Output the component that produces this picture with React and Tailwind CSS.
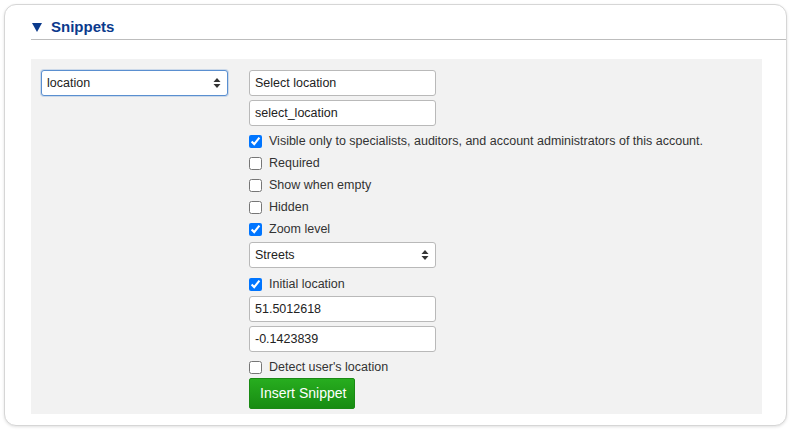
import React from 'react';

const FONT = { fontFamily: '"Liberation Sans", Arial, sans-serif' };

function Arrows() {
  return (
    <svg width="8" height="12" viewBox="0 0 8 12" className="absolute right-[6px] top-1/2 -translate-y-1/2">
      <path d="M4 1 L7.5 5 L0.5 5 Z" fill="#333" />
      <path d="M4 11 L7.5 7 L0.5 7 Z" fill="#333" />
    </svg>
  );
}

function Select({ value, focused }) {
  return (
    <div
      className={
        'relative w-[187px] h-[26px] rounded-[3px] bg-white flex items-center px-[5px] text-[12.5px] text-[#222] ' +
        (focused ? 'border border-[#5a8fd0] shadow-[0_0_0_1px_rgba(90,143,208,0.25)]' : 'border border-[#b9b9b9]')
      }
    >
      {value}
      <Arrows />
    </div>
  );
}

function Field({ value }) {
  return (
    <div className="w-[187px] h-[26px] rounded-[3px] bg-white border border-[#b9b9b9] flex items-center px-[5px] text-[12.5px] text-[#222]">
      {value}
    </div>
  );
}

function Check({ label, checked }) {
  return (
    <label className="h-[22px] pt-[2px] flex items-center gap-[7px] text-[12.5px] text-[#333]">
      <input
        type="checkbox"
        defaultChecked={checked}
        className="m-0 w-[13px] h-[13px] accent-[#0075ff]"
      />
      {label}
    </label>
  );
}

export default function App() {
  return (
    <div className="w-[790px] h-[431px] bg-white p-[4px] pr-[3px] pb-[5px]" style={FONT}>
      <div className="h-full rounded-[12px] border border-[#d6d6d6] shadow-[0_1px_3px_rgba(0,0,0,0.12)] bg-white pl-[26px] pt-[12px]">
        <div className="flex items-center gap-[9px] h-[20px] text-[15px] font-bold text-[#0b3a8c] pl-[1px]">
          <svg width="10" height="9" viewBox="0 0 10 9">
            <path d="M0 0 L10 0 L5 9 Z" fill="#0b3a8c" />
          </svg>
          <span>Snippets</span>
        </div>
        <div className="h-px bg-[#bdbdbd] mt-[2px]" />
        <div className="mt-[19px] w-[731px] bg-[#f2f2f2] pt-[11px] pb-[5px] pl-[10px] flex gap-[21px]">
          <div>
            <Select value="location" focused />
          </div>
          <div className="flex flex-col">
            <Field value="Select location" />
            <div className="mt-[4px]"><Field value="select_location" /></div>
            <div className="mt-[3px]">
              <Check checked label="Visible only to specialists, auditors, and account administrators of this account." />
              <Check label="Required" />
              <Check label="Show when empty" />
              <Check label="Hidden" />
              <Check checked label="Zoom level" />
            </div>
            <div className="mt-[3px]"><Select value="Streets" /></div>
            <div className="mt-[4px]"><Check checked label="Initial location" /></div>
            <div className="mt-[2px]"><Field value="51.5012618" /></div>
            <div className="mt-[4px]"><Field value="-0.1423839" /></div>
            <div className="mt-[3px]"><Check label="Detect user's location" /></div>
            <button className="mt-[1px] w-[106px] h-[31px] rounded-[2px] bg-gradient-to-b from-[#27ad1f] to-[#188c12] border border-[#1a8a14] text-white text-[14px] text-left pl-[10px]">
              Insert Snippet
            </button>
          </div>
        </div>
      </div>
    </div>
  );
}
